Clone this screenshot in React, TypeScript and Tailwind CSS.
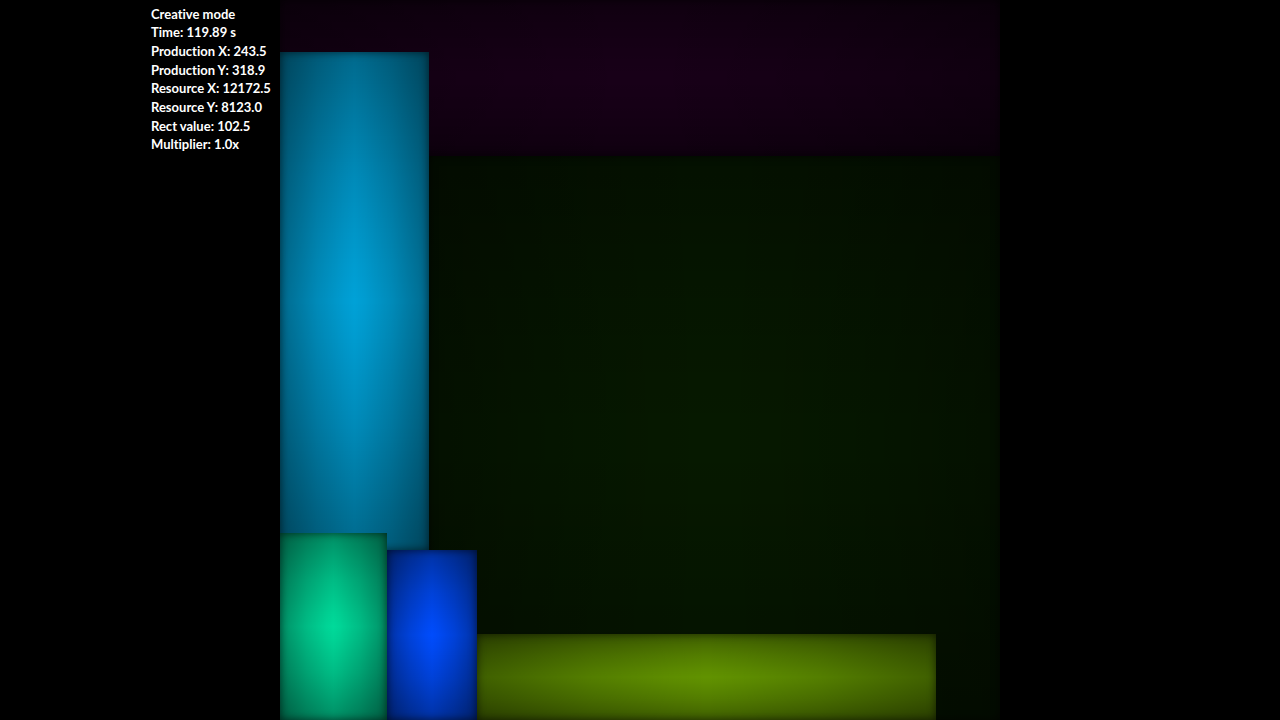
type Stat = {
	label: string;
	value: string;
};

type Block = {
	id: string;
	className: string;
};

const stats: Stat[] = [
	{ label: "Time", value: "119.89 s" },
	{ label: "Production X", value: "243.5" },
	{ label: "Production Y", value: "318.9" },
	{ label: "Resource X", value: "12172.5" },
	{ label: "Resource Y", value: "8123.0" },
	{ label: "Rect value", value: "102.5" },
	{ label: "Multiplier", value: "1.0x" },
];

// Later blocks are drawn over earlier ones.
const blocks: Block[] = [
	{ id: "purple", className: "col-[1/6] row-[1/3] bg-[#180018]" },
	{ id: "forest", className: "col-[3/6] row-[3/7] bg-[#061900]" },
	{ id: "cyan", className: "col-[1/3] row-[2/5] bg-[#00a1d7]" },
	{ id: "green", className: "col-[1/2] row-[4/7] bg-[#00da9a]" },
	{ id: "blue", className: "col-[2/4] row-[5/7] bg-[#004cfc]" },
	{ id: "olive", className: "col-[4/5] row-[6/7] bg-[#619200]" },
];

// Darkens a block towards its edges on both axes, most in the corners.
const cushion =
	"bg-[linear-gradient(to_right,rgba(0,0,0,0.35),rgba(0,0,0,0.14)_25%,rgba(0,0,0,0.03)_43%,transparent,rgba(0,0,0,0.03)_57%,rgba(0,0,0,0.14)_75%,rgba(0,0,0,0.35)),linear-gradient(to_bottom,rgba(0,0,0,0.35),rgba(0,0,0,0.14)_25%,rgba(0,0,0,0.03)_43%,transparent,rgba(0,0,0,0.03)_57%,rgba(0,0,0,0.14)_75%,rgba(0,0,0,0.35))] shadow-[inset_0_0_8px_rgba(0,0,0,0.6)]";

function Hud() {
	return (
		<div className="flex flex-1 justify-end pt-[5px]">
			<ul className="grid h-[149px] w-[129px] auto-rows-fr items-center whitespace-nowrap text-[13px] leading-none font-bold text-white [font-variant-ligatures:none]">
				<li>Creative mode</li>
				{stats.map((stat) => (
					<li key={stat.label}>
						{stat.label}: {stat.value}
					</li>
				))}
			</ul>
		</div>
	);
}

function Board() {
	return (
		<div className="grid aspect-square h-screen grid-cols-[107fr_42fr_48fr_459fr_64fr] grid-rows-[52fr_104fr_377fr_17fr_84fr_86fr]">
			{blocks.map((block) => (
				<div key={block.id} className={`${cushion} ${block.className}`} />
			))}
		</div>
	);
}

export default function App() {
	return (
		<main className="flex min-h-screen bg-black font-['Lato',sans-serif]">
			<Hud />
			<Board />
			<div className="flex-1" />
		</main>
	);
}
